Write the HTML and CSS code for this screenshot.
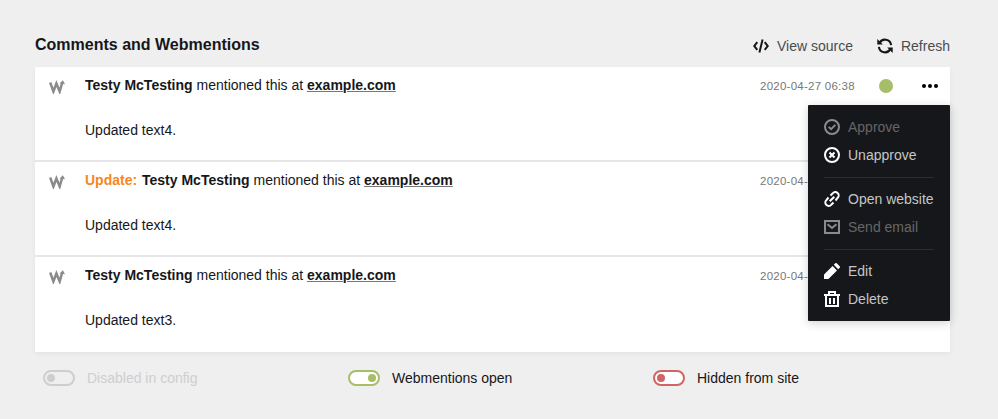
FILE: index.html
```html
<!DOCTYPE html>
<html lang="en">
<head>
<meta charset="utf-8">
<title>Comments and Webmentions</title>
<link rel="stylesheet" href="styles.css">
</head>
<body>
<svg class="defs" width="0" height="0" aria-hidden="true">
  <symbol id="mention" viewBox="0 0 16 14">
    <path d="M1.200 2.500L4.400 11.500 7.400 3.500 10.700 11.500 13.200 2.500" fill="none" stroke="currentColor" stroke-width="2.500"/>
    <path d="M10.600 3.600L13.900.2 16 4.200z" fill="currentColor"/>
  </symbol>
</svg>
<section class="section">
  <header class="header">
    <h2>Comments and Webmentions</h2>
    <nav class="actions">
      <button><svg viewBox="0 0 16 16"><path d="M4.300 4.200L1.200 8l3.100 3.800M11.700 4.200L14.800 8l-3.100 3.800M9.600 1.500L6.400 14.500" fill="none" stroke="currentColor" stroke-width="2"/></svg>View source</button>
      <button><svg viewBox="0 0 16 16"><path d="M2.500 5.200A6.100 6.100 0 0 1 14.100 7.200M13.500 10.800A6.100 6.100 0 0 1 1.900 8.800" fill="none" stroke="currentColor" stroke-width="2.100"/><path d="M.3 1v5.500H5.800zM15.700 15V9.500H10.200z" fill="currentColor"/></svg>Refresh</button>
    </nav>
  </header>
  <div class="list">
    <article class="item">
      <svg class="type"><use href="#mention"/></svg>
      <div class="content"><p><strong>Testy McTesting</strong> mentioned this at <a>example.com</a></p><p>Updated text4.</p></div>
      <time>2020-04-27 06:38</time>
      <span class="status"></span>
      <div class="options">
        <svg class="dots" viewBox="0 0 16 16"><circle cx="2" cy="8" r="2"/><circle cx="8" cy="8" r="2"/><circle cx="14" cy="8" r="2"/></svg>
        <div class="menu">
          <div class="entry disabled"><svg viewBox="0 0 16 16"><circle cx="8" cy="8" r="7"/><path d="M4.700 7.900l2.400 2.300 4.200-4.300"/></svg>Approve</div>
          <div class="entry"><svg viewBox="0 0 16 16"><circle cx="8" cy="8" r="7"/><path d="M5.500 5.500l5 5M10.500 5.500l-5 5"/></svg>Unapprove</div>
          <hr>
          <div class="entry"><svg viewBox="0 0 16 16"><path d="M6.500 4.500l2.300-2.300a3.250 3.250 0 0 1 5 4.500L11.500 9.500M9.500 11.500l-2.300 2.300a3.250 3.250 0 0 1-5-4.500L4.500 6.500M5.700 10.300l4.600-4.600"/></svg>Open website</div>
          <div class="entry disabled"><svg viewBox="0 0 16 16"><path d="M1 2h14v12H1zM3.500 5.200L8 9l4.500-3.800"/></svg>Send email</div>
          <hr>
          <div class="entry"><svg viewBox="0 0 16 16"><path class="solid" d="M8.600 3L.3 11.300a1 1 0 0 0-.3.700V16h4a1 1 0 0 0 .7-.3L13 7.400zM15.700 3.300L12.700.3a1 1 0 0 0-1.400 0L9.800 1.800l4.400 4.400 1.500-1.500a1 1 0 0 0 0-1.400z"/></svg>Edit</div>
          <div class="entry"><svg viewBox="0 0 16 16"><path d="M0 4h16M2 4v11h12V4M5 4V1h6v3M6 7v6M10 7v6"/></svg>Delete</div>
        </div>
      </div>
    </article>
    <article class="item">
      <svg class="type"><use href="#mention"/></svg>
      <div class="content"><p><strong class="update">Update:</strong> <strong>Testy McTesting</strong> mentioned this at <a>example.com</a></p><p>Updated text4.</p></div>
      <time>2020-04-27 06:38</time>
    </article>
    <article class="item">
      <svg class="type"><use href="#mention"/></svg>
      <div class="content"><p><strong>Testy McTesting</strong> mentioned this at <a>example.com</a></p><p>Updated text3.</p></div>
      <time>2020-04-27 06:38</time>
    </article>
  </div>
  <footer class="legend">
    <div class="toggle off"><i></i>Disabled in config</div>
    <div class="toggle open"><i></i>Webmentions open</div>
    <div class="toggle hidden"><i></i>Hidden from site</div>
  </footer>
</section>
</body>
</html>
```
FILE: styles.css
```css
* { box-sizing: border-box; }
body {
  margin: 0;
  background: #efefef;
  color: #16171a;
  font: 14px/20px "Liberation Sans", Arial, sans-serif;
}
.defs { display: block; }
.section { padding: 34px 48px 0 35px; }
.header { display: flex; justify-content: space-between; height: 33px; }
h2 { margin: 1px 0 0; font-size: 16px; line-height: 20px; }
.actions { display: flex; gap: 24px; padding-top: 2px; }
button {
  display: flex;
  align-items: center;
  gap: 8px;
  height: 20px;
  padding: 0;
  border: 0;
  background: none;
  color: #4b4c4e;
  font: inherit;
}
button svg { width: 16px; height: 16px; color: #16171a; }
.list { background: #fff; box-shadow: 0 2px 5px rgba(22, 23, 26, .05); }
.item {
  display: flex;
  height: 95px;
  padding-top: 8px;
  border-bottom: 2px solid #e6e6e6;
}
.item:last-child { border: 0; }
.type { flex: none; width: 16px; height: 14px; margin: 5px 20px 0 14px; color: #8a8b8c; }
.content { flex: 1; }
.content p { margin: 0 0 25px; }
.content a { font-weight: bold; text-decoration: underline 1px #777; text-underline-offset: 1px; }
.update { color: #f5871f; margin-right: 1px; }
time { width: 190px; color: #777; font-size: 11.5px; letter-spacing: .25px; line-height: 22px; }
.item:first-child time { width: 95px; white-space: nowrap; }
.status { width: 14px; height: 14px; margin: 4px 29px 0 24px; border-radius: 50%; background: #a7bd68; }
.options { position: relative; width: 28px; height: 20px; }
.dots { display: block; width: 16px; height: 16px; margin-top: 3px; }
.menu {
  position: absolute;
  z-index: 1;
  top: 30px;
  right: 0;
  width: 142px;
  padding: 8px 16px;
  border-radius: 1px;
  background: #16171a;
  color: #c5c6c7;
  box-shadow: 0 2px 10px rgba(22, 23, 26, .2);
}
.entry { display: flex; align-items: center; gap: 8px; height: 28px; white-space: nowrap; }
.entry svg { flex: none; width: 16px; height: 16px; fill: none; stroke: #fff; stroke-width: 2; }
.entry .solid { fill: #fff; stroke: none; }
.disabled { color: #656667; }
.disabled svg { stroke: #8a8b8c; }
hr { height: 1px; margin: 8px 0 7px; border: 0; background: #2d2e31; }
.legend { display: grid; grid-template-columns: repeat(3, 305px); padding-top: 16px; }
.toggle { display: flex; align-items: center; gap: 12px; padding-left: 8px; }
.toggle i { display: flex; width: 32px; height: 16px; padding: 2px; border: 2px solid; border-radius: 8px; background: #fff; }
.toggle i::before { content: ""; width: 8px; height: 8px; border-radius: 50%; background: currentColor; }
.off { color: #cecece; }
.off i { background: none; }
.open i { color: #a7bd68; justify-content: flex-end; }
.hidden i { color: #d16464; }
```
